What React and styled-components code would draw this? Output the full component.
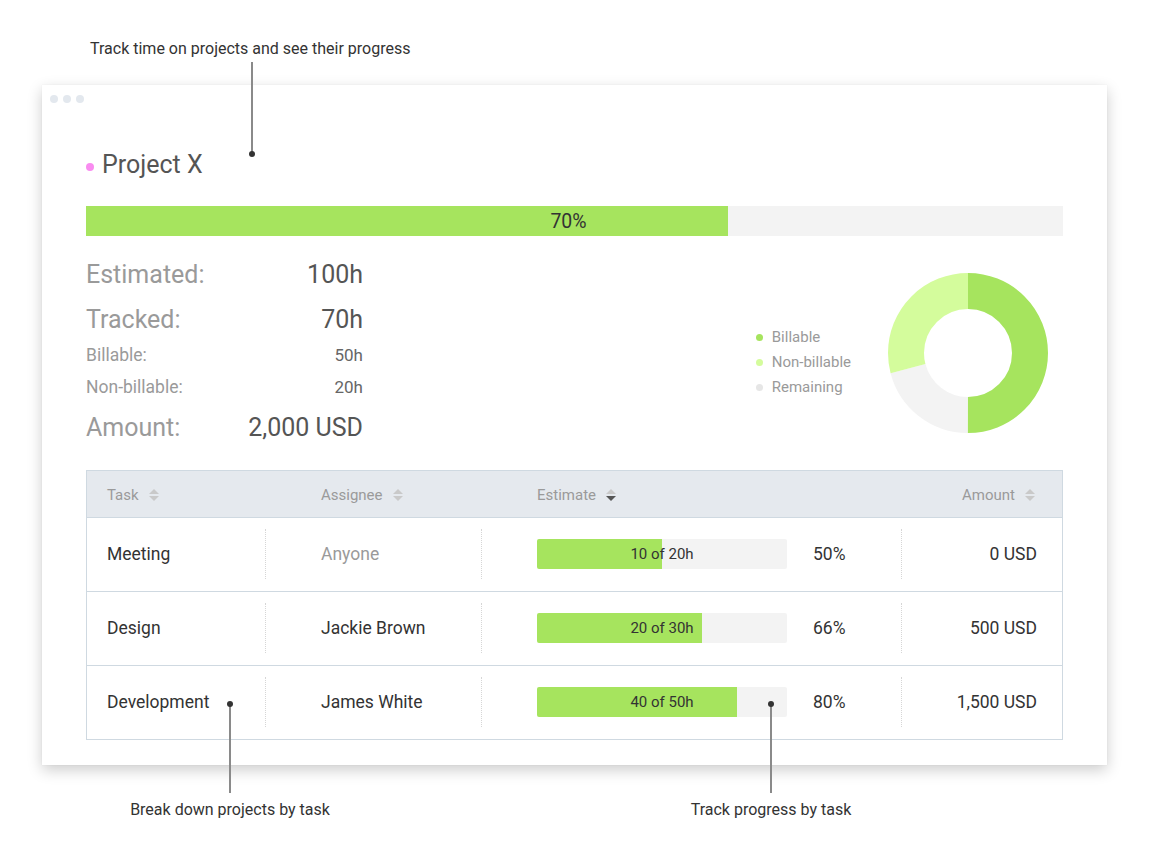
import styled, { createGlobalStyle } from 'styled-components'

const GREEN = '#a6e45e'
const LIGHT_GREEN = '#d4fc9c'
const TRACK = '#f3f3f3'
const LINE = '#cfd9e1'

const GlobalStyle = createGlobalStyle`
  body {
    margin: 0;
    background: #fff;
    font-family: Roboto, 'Liberation Sans', Arial, sans-serif;
    color: #333;
  }
`

const tasks = [
  { name: 'Meeting', assignee: 'Anyone', muted: true, done: 10, total: 20, pct: 50, amount: '0 USD' },
  { name: 'Design', assignee: 'Jackie Brown', done: 20, total: 30, pct: 66, amount: '500 USD' },
  { name: 'Development', assignee: 'James White', done: 40, total: 50, pct: 80, amount: '1,500 USD' },
]

const SortIcon = ({ active }) => (
  <svg width='12' height='14' viewBox='0 0 12 14'>
    <polygon points='6,1 11,6 1,6' fill='#c9c9c9' />
    <polygon points='1,8 11,8 6,13' fill={active ? '#555' : '#c9c9c9'} />
  </svg>
)

const Donut = () => {
  const r = 62
  const c = 2 * Math.PI * r
  const parts = [
    { from: 0, to: 0.5, color: GREEN },
    { from: 0.5, to: 0.708, color: TRACK },
    { from: 0.708, to: 1, color: LIGHT_GREEN },
  ]
  return (
    <svg width='160' height='160' viewBox='0 0 160 160'>
      <g transform='rotate(-90 80 80)'>
        {parts.map((p) => (
          <circle
            key={p.color}
            cx='80'
            cy='80'
            r={r}
            fill='none'
            stroke={p.color}
            strokeWidth='36'
            strokeDasharray={`${(p.to - p.from) * c} ${c}`}
            strokeDashoffset={-p.from * c}
          />
        ))}
      </g>
    </svg>
  )
}

const App = () => (
  <Page>
    <GlobalStyle />
    <TopNote>Track time on projects and see their progress</TopNote>

    <Card>
      <WindowDots>
        <Dot />
        <Dot />
        <Dot />
      </WindowDots>

      <Title>
        <TitleDot />
        Project X
      </Title>

      <MainBar $pct={65.7}>70%</MainBar>

      <Summary>
        <Stats>
          <StatRow $big>
            <StatLabel $big>Estimated:</StatLabel>
            <StatValue $big>100h</StatValue>
          </StatRow>
          <StatRow $mt={11} $big>
            <StatLabel $big>Tracked:</StatLabel>
            <StatValue $big>70h</StatValue>
          </StatRow>
          <StatRow $mt={7}>
            <StatLabel>Billable:</StatLabel>
            <StatValue>50h</StatValue>
          </StatRow>
          <StatRow $mt={10}>
            <StatLabel>Non-billable:</StatLabel>
            <StatValue>20h</StatValue>
          </StatRow>
          <StatRow $mt={13} $big>
            <StatLabel $big>Amount:</StatLabel>
            <StatValue $big>2,000 USD</StatValue>
          </StatRow>
        </Stats>

        <ChartArea>
          <Legend>
            <LegendItem $color={GREEN}>Billable</LegendItem>
            <LegendItem $color={LIGHT_GREEN}>Non-billable</LegendItem>
            <LegendItem $color='#e6e6e6'>Remaining</LegendItem>
          </Legend>
          <Donut />
        </ChartArea>
      </Summary>

      <Table>
        <HeaderRow>
          <HeadCell>
            Task <SortIcon />
          </HeadCell>
          <HeadCell $pad={55}>
            Assignee <SortIcon />
          </HeadCell>
          <HeadCell $pad={55}>
            Estimate <SortIcon active />
          </HeadCell>
          <HeadCell $right>
            Amount <SortIcon />
          </HeadCell>
        </HeaderRow>
        {tasks.map((t) => (
          <Row key={t.name}>
            <Cell>
              <CellInner $first>{t.name}</CellInner>
            </Cell>
            <Cell>
              <CellInner $pad={55} $muted={t.muted}>{t.assignee}</CellInner>
            </Cell>
            <Cell>
              <CellInner $pad={55}>
                <TaskBar $pct={t.pct}>
                  {t.done} of {t.total}h
                </TaskBar>
                <Percent>{t.pct}%</Percent>
              </CellInner>
            </Cell>
            <Cell>
              <CellInner $right>{t.amount}</CellInner>
            </Cell>
          </Row>
        ))}
      </Table>
    </Card>

    <BottomNotes>
      <Note>Break down projects by task</Note>
      <Note>Track progress by task</Note>
    </BottomNotes>

    <Callout $x={252} $top={62} $height={92} $dot='bottom' />
    <Callout $x={230} $top={704} $height={89} $dot='top' />
    <Callout $x={771} $top={704} $height={89} $dot='top' />
  </Page>
)

const Page = styled.div`
  position: relative;
  width: 1150px;
  height: 862px;
  padding-top: 39px;
  box-sizing: border-box;
`

const TopNote = styled.div`
  margin-left: 90px;
  font-size: 16px;
  line-height: 20px;
  color: #333;
`

const Card = styled.div`
  margin: 26px 0 0 42px;
  width: 1065px;
  height: 680px;
  box-sizing: border-box;
  padding: 0 44px 25px;
  background: #fff;
  box-shadow: 0 5px 14px rgba(0, 0, 0, 0.2), 0 0 1px rgba(0, 0, 0, 0.08);
  display: flex;
  flex-direction: column;
`

const WindowDots = styled.div`
  display: flex;
  gap: 5px;
  padding-top: 10px;
  margin-left: -36px;
`

const Dot = styled.span`
  width: 8px;
  height: 8px;
  border-radius: 50%;
  background: #e3e8ee;
`

const Title = styled.h1`
  margin: 47px 0 0;
  display: flex;
  align-items: center;
  gap: 8px;
  font-size: 25px;
  line-height: 30px;
  font-weight: 400;
  color: #555;
`

const TitleDot = styled.span`
  width: 8px;
  height: 8px;
  border-radius: 50%;
  background: #f98cf0;
  margin-top: 4px;
`

const MainBar = styled.div`
  margin-top: 26px;
  height: 30px;
  display: flex;
  align-items: center;
  justify-content: center;
  padding-right: 12px;
  font-size: 19.5px;
  color: #333;
  background: linear-gradient(to right, ${GREEN} ${({ $pct }) => $pct}%, ${TRACK} ${({ $pct }) => $pct}%);
`

const Summary = styled.div`
  display: flex;
  justify-content: space-between;
  align-items: center;
  padding-top: 22px;
`

const Stats = styled.div`
  width: 277px;
  display: flex;
  flex-direction: column;
`

const StatRow = styled.div`
  margin-top: ${({ $mt }) => $mt || 0}px;
  display: flex;
  justify-content: space-between;
  line-height: ${({ $big }) => ($big ? 34 : 22)}px;
`

const StatLabel = styled.span`
  font-size: ${({ $big }) => ($big ? 25 : 17.5)}px;
  color: #9a9a9a;
`

const StatValue = styled.span`
  font-size: ${({ $big }) => ($big ? 25 : 17)}px;
  color: ${({ $big }) => ($big ? '#555' : '#666')};
`

const ChartArea = styled.div`
  display: flex;
  align-items: center;
  gap: 37px;
  margin: 3px 15px 0 0;
`

const Legend = styled.ul`
  list-style: none;
  margin: 18px 0 0;
  padding: 0;
  display: flex;
  flex-direction: column;
  gap: 5px;
`

const LegendItem = styled.li`
  display: flex;
  align-items: center;
  gap: 9px;
  font-size: 15px;
  line-height: 20px;
  color: #9a9a9a;

  &::before {
    content: '';
    width: 7px;
    height: 7px;
    border-radius: 50%;
    background: ${({ $color }) => $color};
  }
`

const Table = styled.div`
  margin-top: auto;
  border: 1px solid ${LINE};
`

const columns = '178px 216px 420px 1fr'

const HeaderRow = styled.div`
  display: grid;
  grid-template-columns: ${columns};
  height: 47px;
  padding-top: 2px;
  box-sizing: border-box;
  background: #e5e9ee;
  border-bottom: 1px solid ${LINE};
`

const HeadCell = styled.div`
  display: flex;
  align-items: center;
  justify-content: ${({ $right }) => ($right ? 'flex-end' : 'flex-start')};
  gap: 9px;
  padding-left: ${({ $pad }) => ($pad ? $pad + 1 : 20)}px;
  padding-right: ${({ $right }) => ($right ? 26 : 0)}px;
  font-size: 15px;
  color: #9a9a9a;
`

const Row = styled.div`
  display: grid;
  grid-template-columns: ${columns};
  height: 73px;

  & + & {
    border-top: 1px solid ${LINE};
  }
`

const Cell = styled.div`
  padding: 11px 0 12px;
  display: flex;
`

const CellInner = styled.div`
  flex: 1;
  display: flex;
  align-items: center;
  justify-content: ${({ $right }) => ($right ? 'flex-end' : 'flex-start')};
  padding-left: ${({ $first, $pad }) => ($first ? 20 : $pad || 0)}px;
  padding-right: ${({ $right }) => ($right ? 25 : 0)}px;
  border-left: ${({ $first }) => ($first ? 'none' : '1px dotted #d6d6d6')};
  font-size: 17.5px;
  color: ${({ $muted }) => ($muted ? '#9a9a9a' : '#333')};
`

const TaskBar = styled.div`
  width: 250px;
  height: 30px;
  border-radius: 2px;
  display: flex;
  align-items: center;
  justify-content: center;
  font-size: 15px;
  color: #333;
  background: linear-gradient(to right, ${GREEN} ${({ $pct }) => $pct}%, ${TRACK} ${({ $pct }) => $pct}%);
`

const Percent = styled.span`
  margin-left: 26px;
  font-size: 17.5px;
  color: #333;
`

const BottomNotes = styled.div`
  display: grid;
  grid-template-columns: 460px 622px;
  margin-top: 35px;
`

const Note = styled.div`
  text-align: center;
  font-size: 16px;
  line-height: 20px;
  color: #333;
`

const Callout = styled.div`
  position: absolute;
  left: ${({ $x }) => $x - 1}px;
  top: ${({ $top }) => $top}px;
  width: 1.5px;
  height: ${({ $height }) => $height}px;
  background: #8a8a8a;

  &::after {
    content: '';
    position: absolute;
    left: -2.5px;
    ${({ $dot }) => ($dot === 'top' ? 'top: -3px;' : 'bottom: -3px;')}
    width: 6px;
    height: 6px;
    border-radius: 50%;
    background: #333;
  }
`

export default App
